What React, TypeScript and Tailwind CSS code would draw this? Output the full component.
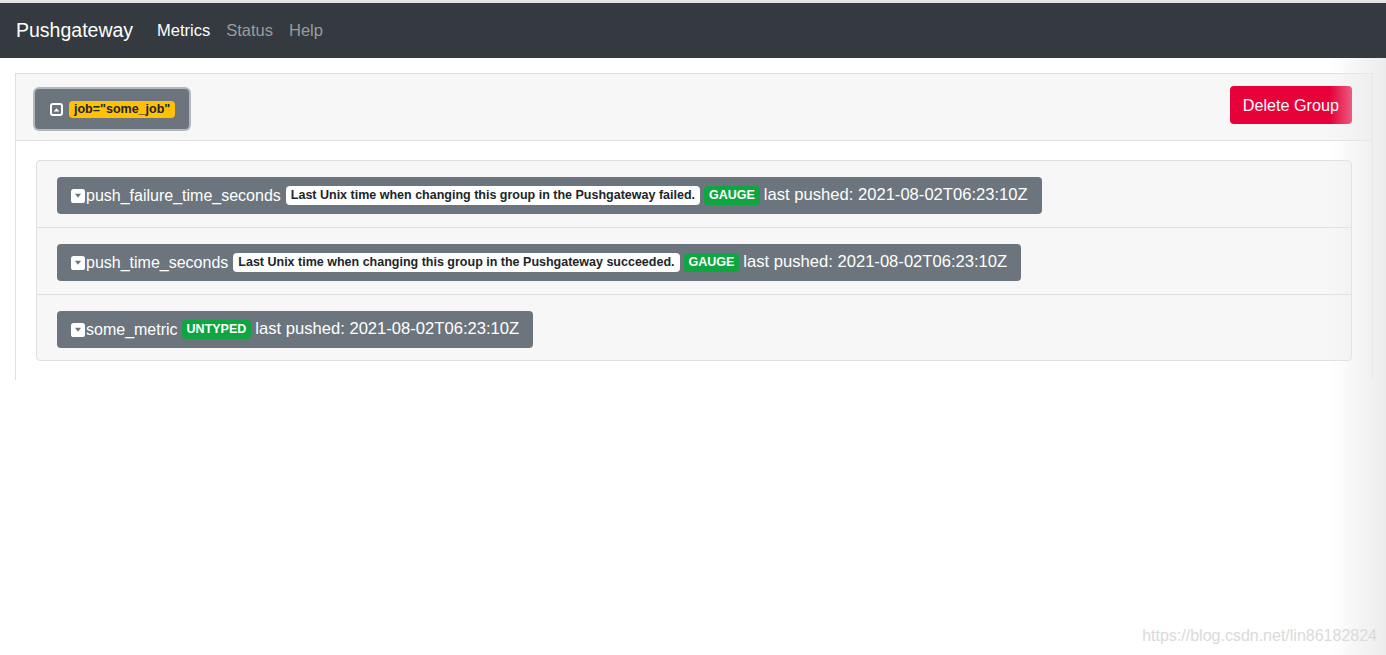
import React from "react";

const font = { fontFamily: '"Liberation Sans", Arial, sans-serif' };

type Metric = {
  name: string;
  help?: string;
  type: string;
  pushed: string;
};

const metrics: Metric[] = [
  {
    name: "push_failure_time_seconds",
    help: "Last Unix time when changing this group in the Pushgateway failed.",
    type: "GAUGE",
    pushed: "2021-08-02T06:23:10Z",
  },
  {
    name: "push_time_seconds",
    help: "Last Unix time when changing this group in the Pushgateway succeeded.",
    type: "GAUGE",
    pushed: "2021-08-02T06:23:10Z",
  },
  {
    name: "some_metric",
    type: "UNTYPED",
    pushed: "2021-08-02T06:23:10Z",
  },
];

const CaretUpSquare = (): JSX.Element => (
  <svg width="13" height="13" viewBox="0 0 16 16" className="shrink-0">
    <rect x="1.2" y="1.2" width="13.6" height="13.6" rx="2.5" fill="none" stroke="white" strokeWidth="2.4" />
    <path d="M4.5 10.5 L11.5 10.5 L8 6.5 Z" fill="white" />
  </svg>
);

const CaretDownSquare = (): JSX.Element => (
  <svg width="14" height="14" viewBox="0 0 16 16" className="shrink-0">
    <rect x="0" y="0" width="16" height="16" rx="3" fill="white" />
    <path d="M4.5 5.5 L11.5 5.5 L8 10 Z" fill="#6c757d" />
  </svg>
);

const MetricRow = ({ m, last }: { m: Metric; last: boolean }): JSX.Element => (
  <div className={`flex px-5 pt-4 ${last ? "pb-3" : "pb-[13px] border-b border-[#dfdfdf]"}`}>
    <div className="flex items-center h-[37px] px-[14px] rounded bg-[#6c757d] text-white text-[16px] whitespace-nowrap">
      <CaretDownSquare />
      <span className="ml-[1px]">{m.name}</span>
      {m.help && (
        <span className="ml-[5px] px-[5px] py-[2px] rounded bg-white text-[#212529] text-[12.5px] font-bold leading-[15px]">
          {m.help}
        </span>
      )}
      <span className="ml-[4px] px-[5px] py-[2px] rounded bg-[#0ea640] text-white text-[12.5px] font-bold leading-[15px]">
        {m.type}
      </span>
      <span className="ml-[4px] text-[16.6px]">last pushed: {m.pushed}</span>
    </div>
  </div>
);

export default function App(): JSX.Element {
  return (
    <div className="relative w-[1386px] h-[655px] overflow-hidden bg-white" style={font}>
      <div className="h-[3px] bg-[#e4e4e4]" />
      <nav className="h-[55px] bg-[#343a40] flex items-center px-4">
        <span className="text-white text-[19.5px] mr-[24px]">Pushgateway</span>
        <div className="flex gap-4 text-[16.5px]">
          <span className="text-white">Metrics</span>
          <span className="text-[#999c9f]">Status</span>
          <span className="text-[#999c9f]">Help</span>
        </div>
      </nav>

      <div className="ml-[15px] mr-[13px] mt-[15px] border-x border-t border-[#dfdfdf] h-[307px]">
        <div className="h-[67px] bg-[#f7f7f7] border-b border-[#dfdfdf] flex items-start justify-between pl-[17px] pr-5 pt-3">
          <div className="rounded-[6px] p-[2px] bg-[#b4b8bd] mt-[1px]">
            <div className="h-[40px] pl-[15px] pr-[14px] rounded bg-[#6c757d] flex items-center gap-[6px]">
              <CaretUpSquare />
              <span className="px-[5px] py-[1px] rounded bg-[#ffc107] text-[#212529] text-[12.5px] font-bold leading-[15px]">
                job="some_job"
              </span>
            </div>
          </div>
          <button className="h-[38px] px-[13px] rounded bg-[#e8003a] text-white text-[16.2px]">
            Delete Group
          </button>
        </div>
        <div className="px-5 pt-[19px]">
          <div className="rounded border border-[#dfdfdf] bg-[#f7f7f7]">
            {metrics.map((m, i) => (
              <MetricRow key={m.name} m={m} last={i === metrics.length - 1} />
            ))}
          </div>
        </div>
      </div>

      <div className="pointer-events-none absolute top-[58px] bottom-0 right-0 w-[56px] bg-gradient-to-r from-transparent to-[#ececec]" />
      <span className="absolute right-[9px] top-[624px] text-[16px] text-[#dadada]">
        https://blog.csdn.net/lin86182824
      </span>
    </div>
  );
}
